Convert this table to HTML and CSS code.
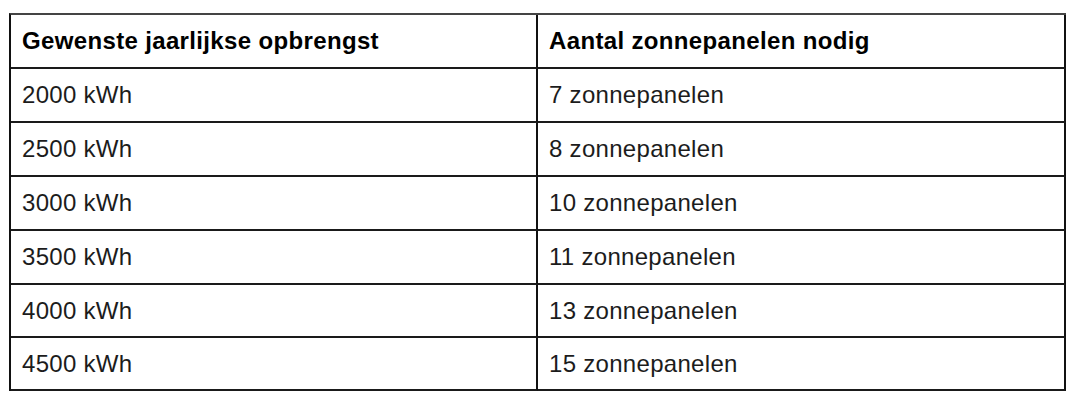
FILE: index.html
```html
<!DOCTYPE html>
<html lang="nl">
<head>
<meta charset="utf-8">
<title>Zonnepanelen</title>
<link rel="stylesheet" href="styles.css">
</head>
<body>
<div class="grid" role="table">
  <div class="cell head" role="columnheader">Gewenste jaarlijkse opbrengst</div>
  <div class="cell head" role="columnheader">Aantal zonnepanelen nodig</div>
  <div class="cell" role="cell">2000 kWh</div>
  <div class="cell" role="cell">7 zonnepanelen</div>
  <div class="cell" role="cell">2500 kWh</div>
  <div class="cell" role="cell">8 zonnepanelen</div>
  <div class="cell" role="cell">3000 kWh</div>
  <div class="cell" role="cell">10 zonnepanelen</div>
  <div class="cell" role="cell">3500 kWh</div>
  <div class="cell" role="cell">11 zonnepanelen</div>
  <div class="cell" role="cell">4000 kWh</div>
  <div class="cell" role="cell">13 zonnepanelen</div>
  <div class="cell" role="cell">4500 kWh</div>
  <div class="cell" role="cell">15 zonnepanelen</div>
</div>
</body>
</html>
```
FILE: styles.css
```css
html, body {
  margin: 0;
  padding: 0;
  background: #ffffff;
}
body {
  padding: 13px 0 0 9px;
  font-family: "Liberation Sans", Arial, sans-serif;
}
.grid {
  box-sizing: border-box;
  width: 1057px;
  display: grid;
  grid-template-columns: 527px 528px;
  grid-template-rows: 54px 54px 54px 54px 54px 53px 53px;
  border-top: 2px solid #444;
  border-left: 2px solid #111;
}
.cell {
  box-sizing: border-box;
  display: flex;
  align-items: center;
  padding: 0 11px;
  border-right: 2px solid #111;
  border-bottom: 2px solid #1a1a1a;
  font-size: 24px;
  letter-spacing: 0.3px;
  color: #1c1c1c;
  white-space: nowrap;
}
.head {
  font-weight: bold;
  letter-spacing: 0.35px;
  color: #000;
}
```
